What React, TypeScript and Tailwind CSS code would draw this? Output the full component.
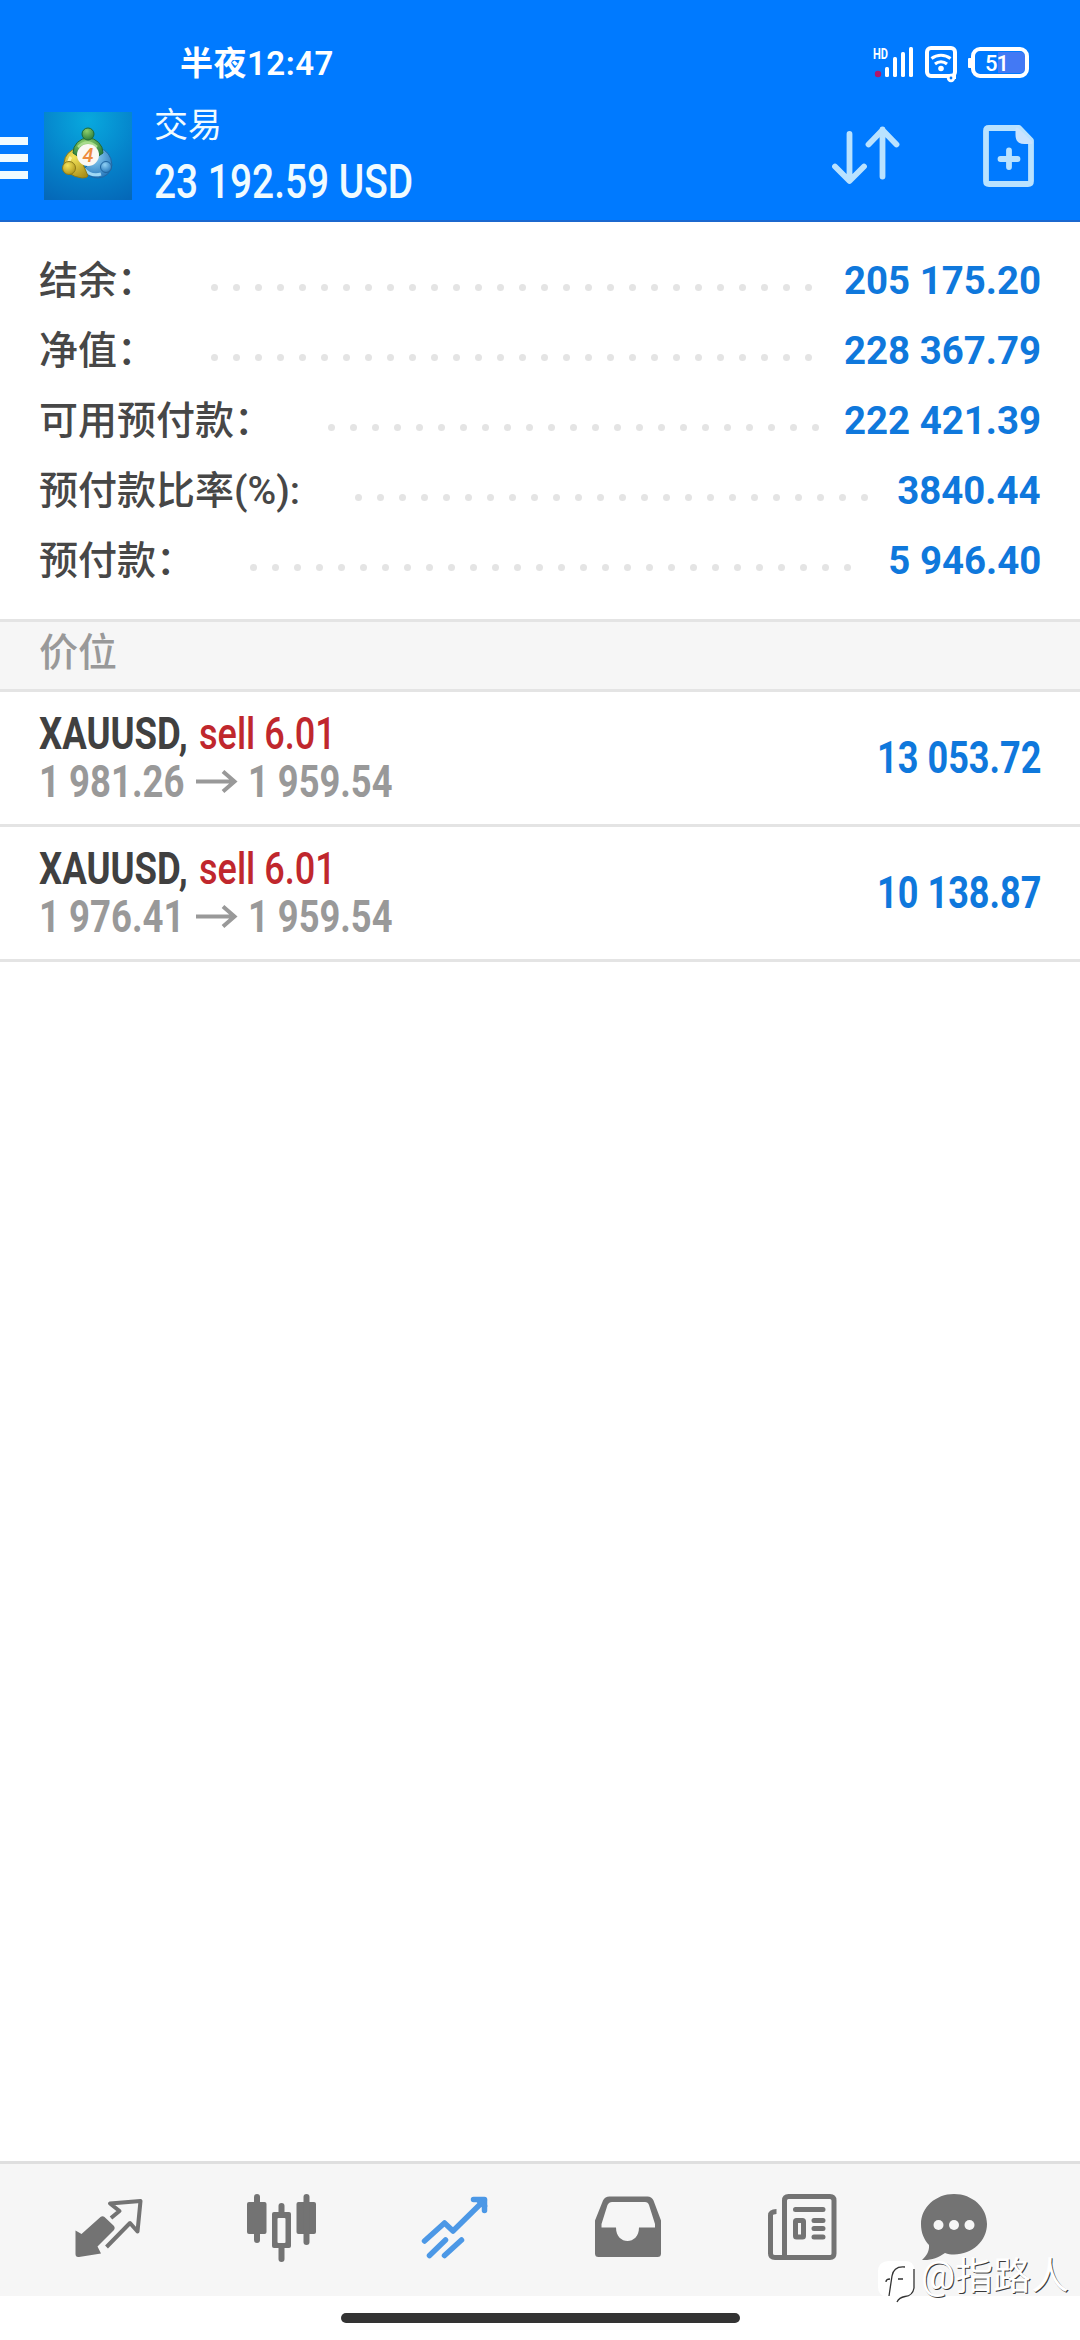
import type { ReactNode } from "react";

type Summary = { label: string; value: string; dots: number };
type Position = {
  symbol: string;
  side: string;
  open: string;
  current: string;
  profit: string;
};

const summary: Summary[] = [
  { label: "结余：", value: "205 175.20", dots: 28 },
  { label: "净值：", value: "228 367.79", dots: 28 },
  { label: "可用预付款：", value: "222 421.39", dots: 23 },
  { label: "预付款比率(%):", value: "3840.44", dots: 24 },
  { label: "预付款：", value: "5 946.40", dots: 28 },
];

const positions: Position[] = [
  { symbol: "XAUUSD,", side: "sell 6.01", open: "1 981.26", current: "1 959.54", profit: "13 053.72" },
  { symbol: "XAUUSD,", side: "sell 6.01", open: "1 976.41", current: "1 959.54", profit: "10 138.87" },
];

function StatusBar() {
  return (
    <div className="flex h-[100px] items-start justify-between pl-[180px] pr-[50px] text-white">
      <span className="mt-[42px] text-[33px] font-semibold leading-[43px] tracking-[0.5px]">半夜12:47</span>
      <svg className="mt-[44px]" width="158" height="40" viewBox="871 44 158 40" fill="none">
        <text x="872" y="59" fontSize="14" fontWeight="700" fill="#fff" textLength="15" lengthAdjust="spacingAndGlyphs">HD</text>
        <circle cx="877" cy="74" r="3.200" fill="#b0186c" />
        <g fill="#fff">
          <rect x="884" y="67" width="4" height="10" rx="1.5" />
          <rect x="892" y="57" width="4" height="20" rx="1.5" />
          <rect x="900" y="52" width="4" height="25" rx="1.5" />
          <rect x="908" y="47" width="4" height="30" rx="1.5" />
        </g>
        <rect x="926" y="48" width="28" height="28" rx="4" stroke="#fff" strokeWidth="4" />
        <path d="M930.500 58.500c5.500-4.500 13.500-4.500 19 0M934 64c3.500-3 8.500-3 12 0" stroke="#fff" strokeWidth="3" />
        <circle cx="940" cy="68.500" r="2.800" fill="#fff" />
        <circle cx="950" cy="78" r="2.800" fill="#007aff" stroke="#fff" strokeWidth="2.800" />
        <path d="M953.500 71v8" stroke="#fff" strokeWidth="3" />
        <path d="M997 52h22q5 0 5 5v11q0 5-5 5h-22z" fill="#4379f4" />
        <rect x="972" y="49" width="54" height="27" rx="7" stroke="#fff" strokeWidth="4" />
        <rect x="967" y="58" width="4" height="10" rx="1" fill="#fff" />
        <text x="984" y="71" fontSize="22" fontWeight="500" fill="#fff" textLength="24">51</text>
      </svg>
    </div>
  );
}

function AppLogo() {
  return (
    <svg width="88" height="88" viewBox="0 0 88 88">
      <defs>
        <radialGradient id="sea" cx="0.5" cy="0.1" r="1">
          <stop offset="0" stopColor="#08a9de" />
          <stop offset="0.55" stopColor="#0583cb" />
          <stop offset="1" stopColor="#0568b8" />
        </radialGradient>
        <radialGradient id="green" cx="0.4" cy="0.25" r="0.8">
          <stop offset="0" stopColor="#8fd06b" />
          <stop offset="1" stopColor="#26793a" />
        </radialGradient>
        <radialGradient id="yellow" cx="0.4" cy="0.3" r="0.8">
          <stop offset="0" stopColor="#f3e35a" />
          <stop offset="1" stopColor="#a98d16" />
        </radialGradient>
        <radialGradient id="blue" cx="0.4" cy="0.3" r="0.8">
          <stop offset="0" stopColor="#8fd0f4" />
          <stop offset="1" stopColor="#1c6fb6" />
        </radialGradient>
      </defs>
      <rect width="88" height="88" fill="url(#sea)" />
      {/* blue, yellow and green figures around the coin */}
      <path d="M55 36q12 3 13 17-2 12-14 13-9 0-15-8l10-10z" fill="url(#blue)" stroke="#1f68a5" />
      <path d="M40 57q7 8 17 5" fill="none" stroke="#9fd8f5" strokeWidth="3" />
      <path d="M34 36q-13 3-14 15 2 13 18 15 5 0 6-2l-6-14z" fill="url(#yellow)" stroke="#8b7a18" />
      <path d="M27 45q-3 4-2 9" fill="none" stroke="#fbf3a0" strokeWidth="3" />
      <path d="M29 41a15 15 0 0 1 30 0l-6 4H35z" fill="url(#green)" stroke="#1f6a37" />
      <path d="M34 35q9-9 19 0" fill="none" stroke="#a9dc8d" strokeWidth="2.500" />
      <circle cx="44" cy="22" r="6" fill="url(#green)" stroke="#1f6a37" />
      <circle cx="25" cy="56" r="6.500" fill="url(#yellow)" stroke="#8b7a18" />
      <circle cx="62" cy="55" r="5.500" fill="url(#blue)" stroke="#20659f" />
      <circle cx="44" cy="43" r="11" fill="#fbf8f3" />
      <text x="44" y="50" fontSize="20" fontStyle="italic" fontWeight="500" textAnchor="middle" fill="#ee8b3d">4</text>
    </svg>
  );
}

function TitleBar() {
  return (
    <div className="flex h-[122px] items-start">
      <div className="mt-[37px] flex w-[44px] flex-col gap-[9px]">
        <span className="h-[8px] w-[28px] bg-[#f0fbff]" />
        <span className="h-[8px] w-[28px] bg-[#f0fbff]" />
        <span className="h-[8px] w-[28px] bg-[#f0fbff]" />
      </div>
      <div className="mt-[12px]">
        <AppLogo />
      </div>
      <div className="ml-[22px] flex flex-1 flex-col whitespace-nowrap text-[#f0fbff]">
        <span className="mt-[4px] text-[34px] leading-[43px]">交易</span>
        <span className="mt-[6px] origin-left scale-x-[0.81] text-[48px] font-medium leading-[58px]">23 192.59 USD</span>
      </div>
      <svg className="mt-[24px] mr-[82px]" width="70" height="64" viewBox="830 124 70 64" fill="none" stroke="#b9e2ff" strokeWidth="5.800" strokeLinecap="round" strokeLinejoin="round">
        <path d="M848.500 134v46.500M834 166.500l14.500 14.500 14.500-14.500M881.500 176.500v-47M867.500 144.500l14-14.500 14 14.500" />
      </svg>
      <svg className="mt-[24px] mr-[45px]" width="52" height="64" viewBox="982 124 52 64" fill="none" stroke="#b9e2ff" strokeWidth="5.800" strokeLinecap="round" strokeLinejoin="round">
        <path d="M988 128h30l12 12.500v40.500q0 3-3 3h-39q-3 0-3-3v-50q0-3 3-3z" />
        <path d="M1016 129v6q0 7.500 7.500 7.500h6.500z" fill="#c9e3ff" stroke="#c9e3ff" strokeWidth="3" />
        <path d="M1008 150.500v16.500M999.500 159h17" />
      </svg>
    </div>
  );
}

function SummaryRow({ label, value, dots }: Summary) {
  return (
    <div className="flex h-[70px] items-center whitespace-nowrap text-[39px] leading-[70px]">
      <span className="font-medium text-[#474747]">{label}</span>
      <span className="ml-[47px] mt-[12px] flex">
        {Array.from({ length: dots }, (_, i) => (
          <span key={i} className="flex w-[22px] justify-center">
            <span className="size-[7px] rounded-full bg-[#e4e4e4]" />
          </span>
        ))}
      </span>
      <span className="ml-auto origin-right scale-x-[0.985] font-bold text-[#0f78dc]">{value}</span>
    </div>
  );
}

function PositionRow({ symbol, side, open, current, profit }: Position) {
  return (
    <div className="flex h-[135px] items-center justify-between border-b-[3px] border-[#e4e4e4] px-[39px] whitespace-nowrap">
      <div className="text-[44px] leading-[48px]">
        <div className="flex">
          <span className="w-[160px]">
            <span className="inline-block origin-left scale-x-[0.83] font-bold text-[#404040]">{symbol}</span>
          </span>
          <span className="inline-block origin-left scale-x-[0.82] font-medium text-[#c0272d]">{side}</span>
        </div>
        <div className="flex items-center font-bold text-[#999999]">
          <span className="w-[156px]">
            <span className="inline-block origin-left scale-x-[0.83]">{open}</span>
          </span>
          <svg width="44" height="24" viewBox="0 0 44 24" fill="none" stroke="#999999" strokeWidth="4">
            <path d="M1 11.500h39M28 1.500l11.500 10-11.500 10" />
          </svg>
          <span className="ml-[9px] inline-block origin-left scale-x-[0.825]">{current}</span>
        </div>
      </div>
      <span className="inline-block origin-right scale-x-[0.82] text-[44px] font-bold text-[#0f78dc]">{profit}</span>
    </div>
  );
}

function NavIcon({ box, children }: { box: string; children: ReactNode }) {
  return (
    <span className="flex justify-center">
      <svg width="72" height="72" viewBox={box} fill="#737373" strokeLinecap="round" strokeLinejoin="round">
        {children}
      </svg>
    </span>
  );
}

function BottomNav() {
  return (
    <nav className="grid h-[135px] grid-cols-[173px_173px_173px_174px_173px_132px] border-t-[3px] border-[#dfdfdf] bg-[#f6f6f6] pt-[28px] pl-[22px]">
      <NavIcon box="73 2192 72 72">
        <path d="M75.500 2230.500l6 3.500 19-17q2-1.500 4 0l9.500 9q1.500 2 0 4l-16.500 16.500 3.500 7-22 3.500q-3.500.5-3.500-3z" />
        <path d="M111 2218l8.500-7-9.500-7.500 30.500-2.500-3 30.500-7.500-8.500-23.500 24" fill="none" stroke="#737373" strokeWidth="4" strokeLinecap="butt" />
      </NavIcon>
      <NavIcon box="245.500 2192 72 72">
        <rect x="246.500" y="2202" width="19.500" height="32" rx="2" />
        <rect x="253.500" y="2194" width="6" height="49" rx="3" />
        <rect x="296" y="2202" width="19.500" height="32" rx="2" />
        <rect x="303" y="2194" width="6" height="51" rx="3" />
        <rect x="278" y="2203" width="6" height="59" rx="3" />
        <rect x="271.500" y="2212" width="19" height="36" rx="2" />
        <rect x="277" y="2218" width="8" height="25" rx="1" fill="#f6f6f6" />
      </NavIcon>
      <NavIcon box="418.500 2192 72 72">
        <g fill="none" stroke="#4c98e6" strokeWidth="5.500">
          <path d="M424 2241l20-18 8.500 8 31.500-31M429 2255.500l16-15.500M444 2255.500l17-15.500M473 2199.500h11v11" />
          <path d="M478 2200l6 6" />
        </g>
      </NavIcon>
      <NavIcon box="591.500 2192 72 72">
        <path d="M609 2196.500h38q4 0 6 4l7.500 20v33q0 3.500-3.500 3.500h-59q-3.500 0-3.500-3.500v-33l8-20q2-4 6.500-4zM611.500 2202q-3 0-4.500 3l-6 19v3.500h14.500c0 18 23 18 23 0h16v-3.500l-6-19q-1-3-4-3z" fillRule="evenodd" />
      </NavIcon>
      <NavIcon box="765 2192 72 72">
        <g fill="none" stroke="#737373" strokeWidth="5">
          <path d="M783.500 2257.500v-57q0-4 4-4h41.500q4 0 4 4v53q0 4-4 4h-55q-4.500 0-4.500-4v-38q0-4 6-4" strokeLinecap="butt" />
          <path d="M794.500 2209.500h27.500M813 2220.500h9M813 2228.500h9M813 2237h9" />
          <rect x="794.500" y="2220.500" width="8" height="16.500" rx="1" />
        </g>
      </NavIcon>
      <NavIcon box="917 2192 72 72">
        <path d="M953 2194c18.500 0 33 13.500 33 30s-14.500 30.500-33 30.500c-3.500 0-6-.5-9-1.500-7 5-14 7.500-23 7 5-4.500 7.500-9.500 7-15-5-5.500-8-12-8-21 0-16.500 14.500-30 33-30z" />
        <g fill="#f6f6f6">
          <circle cx="937.500" cy="2225" r="5" />
          <circle cx="953" cy="2225" r="5" />
          <circle cx="968.500" cy="2225" r="5" />
        </g>
      </NavIcon>
    </nav>
  );
}

function Watermark() {
  return (
    <div className="absolute top-[2250px] left-[878px] flex items-start whitespace-nowrap">
      <svg className="mt-[10px]" width="39" height="44" viewBox="0 0 39 44" fill="none">
        <path d="M10 1h17q9 0 9.500 9v17q0 8-9 10l-9 5-2-5H9q-9-1-9-10V11Q0 2 10 1z" fill="#fff" />
        <path d="M27 7c-9-1-12 3-13 9l-3 20M8 22q0-3 4-3M20 19h5M36 9v19c-1 6-4 8-9 8.500q-6 1-8 5.500" stroke="#333" strokeWidth="1.300" />
      </svg>
      <span className="ml-[4px] text-[38px] leading-[53px] text-white [text-shadow:1px_1px_0_#3a3a3a]">@指路人</span>
    </div>
  );
}

export default function App() {
  return (
    <div className="relative flex h-[2340px] w-[1080px] flex-col overflow-hidden bg-white font-[Roboto,'Noto_Sans_CJK_SC',sans-serif]">
      <header className="h-[222px] border-b-2 border-[#1b68cf] bg-[#007aff]">
        <StatusBar />
        <TitleBar />
      </header>

      <section className="h-[397px] px-[39px] pt-[24px]">
        {summary.map((row) => (
          <SummaryRow key={row.label} {...row} />
        ))}
      </section>

      <h2 className="h-[73px] border-y-[3px] border-[#e4e4e4] bg-[#f6f6f6] px-[39px] text-[39px] font-medium leading-[62px] text-[#999999]">
        价位
      </h2>
      {positions.map((row) => (
        <PositionRow key={row.open} {...row} />
      ))}

      <div className="flex-1" />
      <BottomNav />
      <div className="flex h-[44px] items-start justify-center pt-[17px]">
        <span className="h-[10px] w-[399px] rounded-full bg-[#333333]" />
      </div>
      <Watermark />
    </div>
  );
}
